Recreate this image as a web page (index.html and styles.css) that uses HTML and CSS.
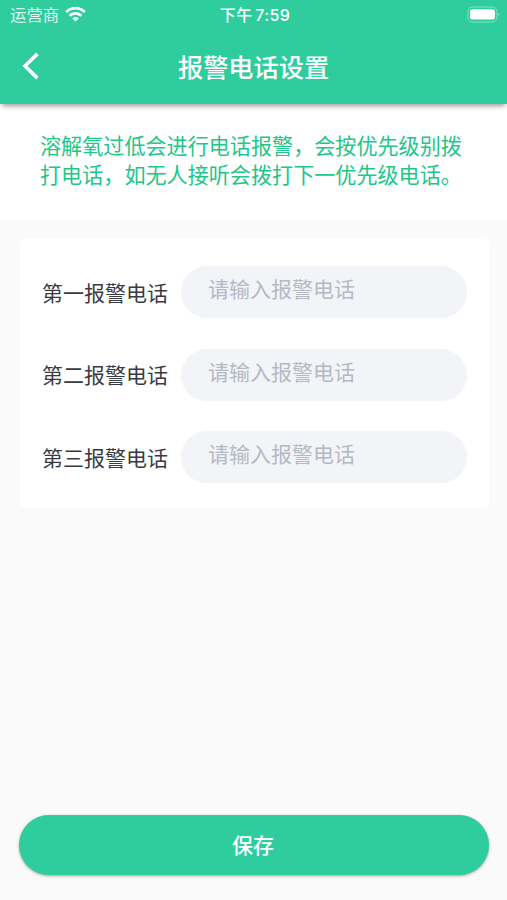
FILE: index.html
```html
<!DOCTYPE html>
<html lang="zh-CN">
<head>
    <meta charset="UTF-8">
    <meta name="viewport" content="width=device-width, initial-scale=1.0">
    <title>报警电话设置</title>
    <link rel="stylesheet" href="styles.css">
</head>
<body>
    <header class="header">
        <div class="status-bar">
            <div class="carrier">
                <span>运营商</span>
                <svg class="wifi" width="21" height="16" viewBox="0 0 21 16">
                    <path d="M1.2 5a13.2 13.2 0 0 1 18.6 0" />
                    <path d="M4.6 8.7a8.4 8.4 0 0 1 11.8 0" />
                    <path class="wifi-dot" d="M7.4 11.5a4.6 4.6 0 0 1 6.2 0L10.5 14.6z" />
                </svg>
            </div>
            <div class="time">下午 7:59</div>
            <div class="battery-box">
                <svg width="33" height="17" viewBox="0 0 33 17">
                    <rect class="battery-frame" x="0.9" y="1" width="29" height="15" rx="4.5" />
                    <rect class="battery-level" x="3" y="3.2" width="25" height="10.4" rx="2.5" />
                    <path class="battery-cap" d="M31.3 6.5a2.3 2.3 0 0 1 0 4z" />
                </svg>
            </div>
        </div>
        <div class="nav-bar">
            <button class="back" aria-label="返回">
                <svg width="18" height="28" viewBox="0 0 18 28">
                    <path d="M15.4 1.9L3 14l12.4 12.1" />
                </svg>
            </button>
            <h1 class="title">报警电话设置</h1>
        </div>
    </header>

    <p class="notice">溶解氧过低会进行电话报警，会按优先级别拨打电话，如无人接听会拨打下一优先级电话。</p>

    <form class="form">
        <div class="card">
            <div class="row">
                <label class="label" for="phone1">第一报警电话</label>
                <input class="field" id="phone1" type="tel" placeholder="请输入报警电话">
            </div>
            <div class="row">
                <label class="label" for="phone2">第二报警电话</label>
                <input class="field" id="phone2" type="tel" placeholder="请输入报警电话">
            </div>
            <div class="row">
                <label class="label" for="phone3">第三报警电话</label>
                <input class="field" id="phone3" type="tel" placeholder="请输入报警电话">
            </div>
        </div>
        <button class="save" type="button">保存</button>
    </form>
</body>
</html>
```

FILE: styles.css
```css
* {
    box-sizing: border-box;
}

body {
    margin: 0;
    height: 100vh;
    display: flex;
    flex-direction: column;
    background: #fafafa;
    color: #3a3a44;
    font-family: Inter, "Noto Sans CJK SC", sans-serif;
}

button,
input {
    border: none;
    font-family: inherit;
}

/* Header */
.header {
    height: 103.5px;
    flex-shrink: 0;
    background: #2fcd9d;
    color: #fff;
    box-shadow: 0 4px 5px -2px rgba(0, 0, 0, 0.4);
    z-index: 1;
}

.status-bar {
    height: 29px;
    padding: 0 7px 0 10px;
    display: grid;
    grid-template-columns: 1fr auto 1fr;
    align-items: center;
}

.carrier {
    display: flex;
    align-items: center;
    gap: 6px;
    font-size: 16.4px;
    line-height: 27px;
    padding-top: 1px;
    color: rgba(255, 255, 255, 0.85);
}

.wifi {
    fill: none;
    stroke: #fff;
    stroke-width: 2.8;
}

.wifi .wifi-dot {
    fill: #fff;
    stroke: none;
}

.time {
    font-size: 16px;
    font-weight: 500;
    line-height: 27px;
    padding-top: 2px;
    letter-spacing: 0.4px;
    word-spacing: -2px;
}

.battery-box {
    display: flex;
    justify-content: flex-end;
}

.battery-frame {
    fill: none;
    stroke: rgba(255, 255, 255, 0.4);
}

.battery-level {
    fill: #fff;
}

.battery-cap {
    fill: rgba(255, 255, 255, 0.4);
}

.nav-bar {
    height: 74px;
    padding: 0 22px;
    display: grid;
    grid-template-columns: 1fr auto 1fr;
    align-items: center;
}

.back {
    width: 20px;
    padding: 0;
    display: flex;
    background: none;
}

.back path {
    fill: none;
    stroke: #fff;
    stroke-width: 3.6;
}

.title {
    margin: 0;
    padding-top: 4px;
    font-size: 25.2px;
    font-weight: 500;
    line-height: 36px;
}

/* Notice */
.notice {
    height: 116.5px;
    margin: 0;
    padding: 28px 40px 0;
    flex-shrink: 0;
    background: #fff;
    color: #22c688;
    font-size: 21.1px;
    line-height: 29.5px;
}

/* Form */
.form {
    flex: 1;
    padding: 19px 18px 25.5px 19px;
    display: flex;
    flex-direction: column;
    justify-content: space-between;
}

.card {
    height: 269px;
    margin-left: 1px;
    padding: 27px 22px 0;
    display: flex;
    flex-direction: column;
    gap: 30.5px;
    background: #fff;
    border-radius: 5px;
}

.row {
    height: 52px;
    display: flex;
    align-items: center;
    justify-content: space-between;
}

.label {
    padding-top: 3px;
    font-size: 21px;
    line-height: 50px;
}

.field {
    width: 286px;
    height: 52px;
    padding: 0 27px 5px;
    background: #f2f4f8;
    border-radius: 26px;
    font-size: 21px;
    outline: none;
}

.field::placeholder {
    color: #b6b9c4;
}

.save {
    height: 59.5px;
    padding: 0 2px 1px 0;
    background: #2fcd9d;
    border-radius: 30px;
    box-shadow: 0 1px 3px rgba(0, 0, 0, 0.35);
    color: #fff;
    font-size: 21px;
    font-weight: 500;
}
```
